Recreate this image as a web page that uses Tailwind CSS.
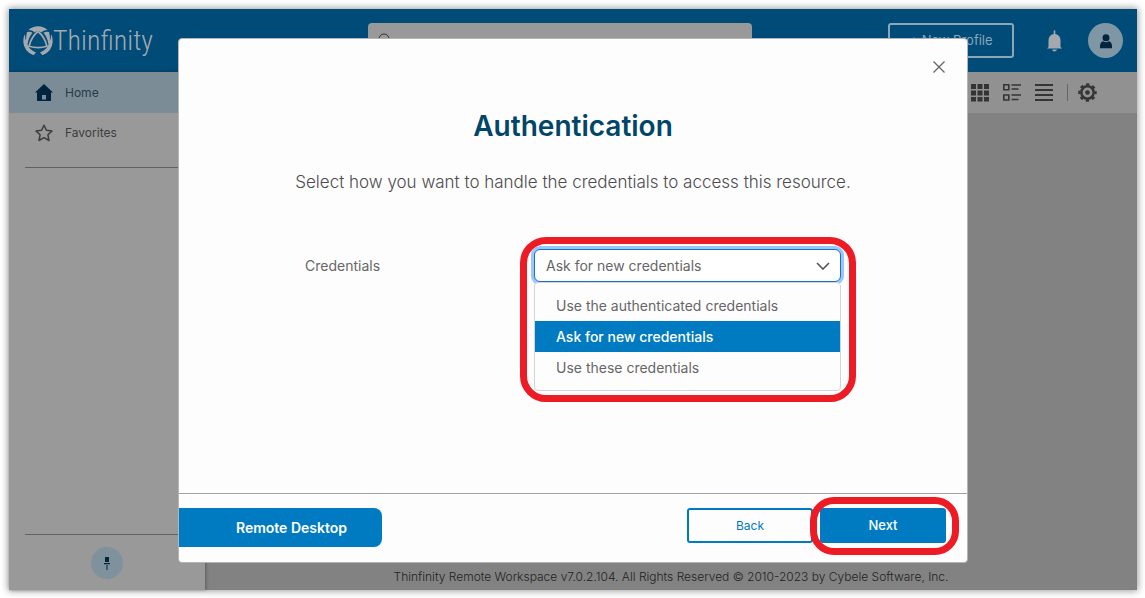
<!DOCTYPE html>
<html lang="en">
<head>
<meta charset="utf-8">
<meta name="viewport" content="width=device-width, initial-scale=1">
<title>Thinfinity Remote Workspace</title>
<script src="https://cdn.jsdelivr.net/npm/@tailwindcss/browser@4"></script>
</head>
<body class="flex min-h-screen bg-white p-[9px] pr-2 pb-2 font-['Inter',sans-serif] text-[#666]">
<div class="relative flex flex-1 flex-col bg-[#828282] shadow-[0_0_7px_1px_rgba(0,0,0,0.4)]">

  <header class="flex h-[63px] items-center bg-[#004b77] pr-3.5 pl-3.5">
    <a href="#" class="flex w-32 shrink-0 items-center text-[#a3a9ae]" aria-label="Thinfinity home">
      <svg class="size-[30px] shrink-0" viewBox="0 0 30 30" fill="currentColor" aria-hidden="true">
        <path d="M5.500 4Q9.500 .3 15 .3T24.500 4Q20 4.200 18.500 6.500Q15 3.500 11.500 6.500Q10 4.200 5.500 4Z"/>
        <path d="M4 6Q7 5 9.500 6.800Q5.500 11.500 4.500 18.500Q6.500 24 13 26.500L10.500 29.300Q1 25.500 .3 16Q.3 10 2 8.500Q2 13 3 14.500Q3 9 4 6Z"/>
        <path d="M26 6Q23 5 20.500 6.800Q24.500 11.500 25.500 18.500Q23.500 24 17 26.500L19.500 29.300Q29 25.500 29.700 16Q29.700 10 28 8.500Q28 13 27 14.500Q27 9 26 6Z"/>
        <path d="M15 5.500Q8.500 10.500 6 20.200Q15 23 24 20.200Q21.500 10.500 15 5.500Z" fill="none" stroke="currentColor" stroke-width="1.700"/>
      </svg>
      <span class="font-['Liberation_Sans_Narrow','Roboto_Condensed','Lato'] text-[28px] leading-9 font-light">Thinfinity</span>
    </a>
    <label class="ml-[217px] flex h-[35px] w-[384px] items-center gap-2 rounded bg-[#999] px-2.5">
      <svg class="size-4 text-[#333]" viewBox="0 0 16 16" fill="none" stroke="currentColor" aria-hidden="true"><circle cx="6" cy="6" r="5"/><path d="m10 10 5 5"/></svg>
      <input type="search" aria-label="Search" class="min-w-0 flex-1 text-[13px] outline-none">
    </label>
    <div class="ml-auto flex items-center">
      <button class="h-[35px] w-[126px] rounded-[3px] border-2 border-[#8ba6b6] text-[13px] text-[#8ba6b6]">+ New Profile</button>
      <button class="ml-8 text-[#a3a9ae]" aria-label="Notifications">
        <svg class="h-[22px] w-[17px]" viewBox="0 0 17 22" fill="currentColor" aria-hidden="true"><path d="M7.700 1a.8.8 0 0 1 1.600 0V4q5.200 1 5.200 6.500V17l1.500 1.500H1L2.500 17v-6.500Q2.500 5 7.700 4ZM6 19.500h5q-.5 2-2.500 2T6 19.500Z"/></svg>
      </button>
      <button class="ml-[25px] grid size-[35px] place-items-center rounded-full bg-[#7f97a4] text-[#00253c]" aria-label="Account">
        <svg class="h-4 w-3.5" viewBox="0 0 14 16" fill="currentColor" aria-hidden="true"><circle cx="7" cy="4.800" r="3.500"/><path d="M1 15.300v-2.500Q1.500 9 4 8.300q3 1.700 6 0 2.500.7 3 4.500v2.500Z"/></svg>
      </button>
    </div>
  </header>

  <div class="flex flex-1">
    <aside class="flex w-[196px] flex-col bg-[#999] shadow-[1px_0_3px_rgba(0,0,0,0.3)]">
      <nav class="text-[12px] text-[#3d3d3d]">
        <a href="#" class="flex h-[41px] items-center gap-3 bg-[#7b8c96] pl-[26px] text-[#263b47]">
          <svg class="size-[18px] text-[#00253f]" viewBox="0 0 18 18" fill="currentColor" aria-hidden="true"><path fill-rule="evenodd" d="M9 0 18 8.500H16V17H2V8.500H0ZM7 11v4.500h4V11Z"/></svg>
          Home
        </a>
        <a href="#" class="flex h-[39px] items-center gap-3 pl-[26px]">
          <svg class="size-[18px]" viewBox="0 0 18 18" fill="none" stroke="currentColor" stroke-width="1.500" stroke-linejoin="round" aria-hidden="true"><path d="m9 1.200 2.400 5 5.600.7-4.100 3.900 1.100 5.700L9 13.700l-5 2.800 1.100-5.700L1 6.900l5.600-.7Z"/></svg>
          Favorites
        </a>
      </nav>
      <hr class="mt-[15px] ml-4 border-[#626262]">
      <div class="mt-auto ml-4 border-t border-[#626262] pt-3 pb-[11px]">
        <button class="ml-[66px] grid size-8 place-items-center rounded-full bg-[#7f919c] text-[#00253c]" aria-label="Pin sidebar">
          <svg class="h-[13px] w-[6px]" viewBox="0 0 6 13" fill="currentColor" aria-hidden="true"><path d="M1 0h4v5H1ZM0 6h6v1.200H0ZM2.500 8h1v5h-1Z"/></svg>
        </button>
      </div>
    </aside>
    <main class="flex flex-1 flex-col">
      <div class="flex h-[41px] items-center justify-end bg-[#919191] pr-10 text-[#343434]">
        <button aria-label="Grid view"><svg class="size-[18px]" viewBox="0 0 18 18" fill="currentColor" aria-hidden="true"><path d="M0 0h5v5H0ZM6.500 0h5v5h-5ZM13 0h5v5h-5ZM0 6.500h5v5H0ZM6.500 6.500h5v5h-5ZM13 6.500h5v5h-5ZM0 13h5v4.500H0ZM6.500 13h5v4.500h-5ZM13 13h5v4.500h-5Z"/></svg></button>
        <button class="ml-3.5" aria-label="Detail view"><svg class="size-[18px]" viewBox="0 0 18 18" fill="none" stroke="currentColor" stroke-width="1.600" aria-hidden="true"><path d="M.8.800h5v5h-5ZM.8 11h5v5h-5ZM8.500 1H18M8.500 5h7M8.500 11H18M8.500 15.500h7"/></svg></button>
        <button class="ml-3.5" aria-label="List view"><svg class="size-[18px]" viewBox="0 0 18 18" fill="none" stroke="currentColor" stroke-width="2" aria-hidden="true"><path d="M0 1h18M0 6h18M0 11h18M0 16h18"/></svg></button>
        <span class="ml-3.5 h-[17px] w-px bg-[#666]"></span>
        <button class="ml-2.5" aria-label="Settings"><svg class="size-[19px]" viewBox="0 0 20 20" fill="none" stroke="currentColor" aria-hidden="true"><circle cx="10" cy="10" r="6.500" stroke-width="2.600"/><circle cx="10" cy="10" r="8.500" stroke-width="2.400" stroke-dasharray="3.500 3.176" stroke-dashoffset="1.750"/><circle cx="10" cy="10" r="2.400" fill="currentColor" stroke="none"/></svg></button>
      </div>
      <footer class="mt-auto pb-1 text-center text-[12px] leading-[18px] font-light text-[#222]">Thinfinity Remote Workspace v7.0.2.104. All Rights Reserved © 2010-2023 by Cybele Software, Inc.</footer>
    </main>
  </div>

  <div class="absolute inset-0 flex items-start justify-center pt-[29px]">
    <section role="dialog" aria-modal="true" aria-labelledby="dialog-title" class="w-[790px] rounded-[4px] border border-[#b4b4b4] bg-[#fefdfe]">
      <div class="flex h-14 items-center justify-end pr-[21px]">
        <button class="grid size-3.5 place-items-center text-[#666]" aria-label="Close">
          <svg class="size-3" viewBox="0 0 12 12" fill="none" stroke="currentColor" stroke-width="1.300" aria-hidden="true"><path d="m.5.5 11 11M11.500.5l-11 11"/></svg>
        </button>
      </div>
      <h1 id="dialog-title" class="mt-[13px] text-center text-[28px] leading-9 font-semibold text-[#004668]">Authentication</h1>
      <p class="mt-[26px] text-center text-[17px] leading-6 font-light text-[#4c4c4c]">Select how you want to handle the credentials to access this resource.</p>
      <div class="mt-[43px] flex h-[256px] items-start px-[126px] text-[14px]">
        <label for="credentials" class="mt-3 w-[215px] shrink-0 leading-[33px]">Credentials</label>
        <div class="w-[336px] shrink-0 rounded-[26px] border-7 border-[#ed1c24] pt-[5px] pr-2 pb-1 pl-[7px]">
          <div class="relative">
            <select id="credentials" class="block h-[33px] w-full appearance-none rounded-md border border-[#1b6fc8] bg-white pb-px pl-[11px] ring-3 ring-[#99c6fb] outline-none">
              <option>Use the authenticated credentials</option>
              <option selected>Ask for new credentials</option>
              <option>Use these credentials</option>
            </select>
            <svg class="pointer-events-none absolute top-[13px] right-[11px] h-2 w-3.5 text-[#555]" viewBox="0 0 14 8" fill="none" stroke="currentColor" stroke-width="1.600" aria-hidden="true"><path d="m1 1 6 6 6-6"/></svg>
          </div>
          <ul role="listbox" aria-label="Credentials options" class="relative rounded-[4px] border border-[#d3d3d8] bg-[#fefdfe] py-[7px] leading-[31px]">
            <li role="option" class="pl-[21px]">Use the authenticated credentials</li>
            <li role="option" aria-selected="true" class="bg-[#007bc2] pl-[21px] font-medium text-white">Ask for new credentials</li>
            <li role="option" class="pl-[21px]">Use these credentials</li>
          </ul>
        </div>
      </div>
      <div class="flex h-[69px] items-start border-t border-[#a2a2a7] pt-3.5">
        <div class="h-[39px] w-[203px] rounded-r-lg bg-[#007bc2] pl-[22px] text-center text-[14px] leading-[39px] font-semibold text-white">Remote Desktop</div>
        <button class="ml-auto h-[35px] w-[126px] rounded-[3px] border-2 border-[#007bc2] text-[12px] text-[#007bc2]">Back</button>
        <div class="relative mr-[21px] ml-[7px]">
          <button class="block h-[35px] w-[126px] rounded-[3px] bg-[#007bc2] text-[13px] font-medium text-white">Next</button>
          <span class="pointer-events-none absolute -top-[11px] -right-[13px] -bottom-3 -left-2.5 rounded-[24px] border-7 border-[#ed1c24]"></span>
        </div>
      </div>
    </section>
  </div>
</div>
</body>
</html>
